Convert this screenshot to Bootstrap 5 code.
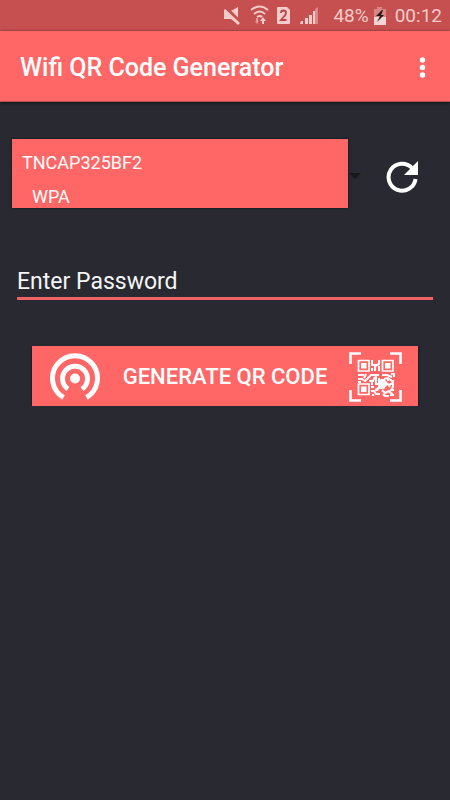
<!DOCTYPE html>
<html lang="en">
<head>
<meta charset="utf-8">
<meta name="viewport" content="width=device-width, initial-scale=1">
<title>Wifi QR Code Generator</title>
<link href="https://cdn.jsdelivr.net/npm/bootstrap@5.3.0/dist/css/bootstrap.min.css" rel="stylesheet">
<style>
  body { font-family: Roboto, "Liberation Sans", sans-serif; background: #282931; color: #fff; }
  svg { display: block; flex: none; }
  .status-bar { height: 31px; background: #c6504f; color: #f3cbcb; font-size: 19px; line-height: 32px; }
  .app-bar { height: 71px; background: #f66; border-bottom: 1px solid #b94f53; box-shadow: 0 1px 3px #10131a; padding-top: 3px; }
  .app-title { font-size: 25px; line-height: 32px; font-weight: 500; }
  .network { height: 69px; background: #f66; box-shadow: 0 0 2px #06141f; font-size: 18px; line-height: 24px; padding: 12px 10px 0; }
  .network select { appearance: none; background: transparent; border: 0; color: #fff; padding: 0; height: 24px; line-height: 24px; }
  .network output { padding: 10px 0 0 10px; }
  .refresh { padding: 6px 19px 0 23px; }
  .password { background: transparent; border: 0; border-bottom: 3px solid #ee6266; color: #fff; font-size: 23px; line-height: 30px; height: 35px; padding: 1px 0 0; }
  .password::placeholder { color: #f5f5f5; opacity: 1; }
  .password:focus { outline: 0; }
  .generate { height: 60px; background: #f66; color: #fff; border: 0; font-size: 22px; line-height: 28px; font-weight: 500; box-shadow: 0 1px 2px #06101a; padding: 2px 16px 0 17px; }
  .form-area { padding: 37px 12px 0; }
  .field-row { padding: 57px 5px 0; }
  .action-row { padding: 46px 20px 0; }
</style>
<script src="https://cdn.jsdelivr.net/npm/bootstrap@5.3.0/dist/js/bootstrap.bundle.min.js"></script>
</head>
<body>
<div class="status-bar d-flex align-items-center justify-content-end pe-2">
  <svg width="109" height="31" viewBox="0 0 109 31" fill="#f3cbcb" aria-hidden="true">
    <path d="M0 12h5l9-5v17l-7-5H0z"/>
    <path d="M0 7l18 18" stroke="#c6504f" stroke-width="5"/>
    <path d="M0 10l15 14" stroke="#f3cbcb" stroke-width="3"/>
    <g fill="none" stroke="#f3cbcb" stroke-width="2"><path d="M27 10q9-7 17 0M30 14q6-5 11 0M33 17q3-2 5 0"/></g>
    <path d="M36 21l3-4 3 4h-2v3h-2v-3z"/>
    <path d="M31 21l2 3 2-3h-1v-3h-2v3z" opacity=".6"/>
    <path d="M54 7h9l3 3v13q0 1-1 1H54q-1 0-1-1V8q0-1 1-1z"/>
    <path d="M57 13q0-2.500 2.500-2.500t2.500 2.500q0 1.500-2 3.500l-3 3.500h5.500" fill="none" stroke="#b84747" stroke-width="1.800"/>
    <path d="M77 21h2v3h-3zM81 18h3v6h-3zM85 15h3v9h-3zM89 11h2v13h-2z"/>
    <path d="M91 9l3-2v17h-3z" opacity=".45"/>
  </svg>
  <span>48%</span>
  <svg class="ms-1 me-2" width="14" height="18" viewBox="0 0 14 18" aria-hidden="true">
    <path d="M4 0h5v2h4v16H1V2h3z" fill="#d98685"/><path d="M1 10h12v8H1z" fill="#f3d5d5"/>
    <path d="M9 3l-6 6h4l-3 6 7-7H8l2-5z" fill="#291818"/>
  </svg>
  <span>00:12</span>
</div>
<header class="app-bar d-flex align-items-center justify-content-between ps-3 pe-3">
  <h1 class="app-title m-0 ps-1">Wifi QR Code Generator</h1>
  <button type="button" class="btn border-0 p-0 me-1" aria-label="More options">
    <svg width="16" height="24" viewBox="0 0 16 24" fill="#fff"><circle cx="8.500" cy="4" r="2.700"/><circle cx="8.500" cy="11.500" r="2.700"/><circle cx="8.500" cy="19" r="2.700"/></svg>
  </button>
</header>
<main class="form-area">
  <div class="d-flex align-items-center">
    <div class="network flex-grow-1 d-flex flex-column">
      <select aria-label="Wifi network"><option>TNCAP325BF2</option></select>
      <output>WPA</output>
    </div>
    <svg class="mt-1" width="14" height="8" viewBox="0 0 14 8" fill="#16171b" aria-hidden="true"><path d="M1 1h12L7 7z"/></svg>
    <button type="button" class="btn border-0 refresh" aria-label="Refresh networks">
      <svg width="34" height="34" viewBox="0 0 34 34"><path d="M30.500 19A13.500 13.500 0 1 1 27 8" fill="none" stroke="#fff" stroke-width="4"/><path d="M33 1v14H19z" fill="#fff"/></svg>
    </button>
  </div>
  <div class="field-row">
    <input class="password w-100 d-block rounded-0" type="password" placeholder="Enter Password" aria-label="Enter Password">
  </div>
  <div class="action-row">
    <button type="button" class="generate w-100 d-flex align-items-center justify-content-between">
      <svg width="52" height="52" viewBox="0 0 52 52" aria-hidden="true"><g fill="none" stroke="#fff" stroke-width="5"><path d="M14.500 46.500A22.500 22.500 0 1 1 37.500 46.500"/><path d="M19 38A12.500 12.500 0 1 1 33 38"/></g><circle cx="26" cy="27.500" r="5" fill="#fff"/></svg>
      <span>GENERATE QR CODE</span>
      <svg width="53" height="50" viewBox="0 0 53 50" aria-hidden="true">
        <path d="M1.500 12V1.500H12M41 1.500H51.500V12M51.500 38V48.500H41M12 48.500H1.500V38" fill="none" stroke="#fff" stroke-width="2.600"/>
        <g fill="none" stroke="#fff" stroke-width="1.700"><path d="M9.500 8.500h10.500v10.500H9.500zM33.500 8.500h10.500v10.500H33.500zM9.500 32h10.500v10.500H9.500z"/></g>
        <path d="M12 11h5.500v5.500H12zM36 11h5.500v5.500H36zM12 34.500h5.500V40H12z" fill="#fff"/>
        <g fill="none" stroke="#fff" stroke-width="2" stroke-linejoin="round">
          <path d="M23 8v5h3v6M30 8v4l-4 2M30 14v5M23 16v3"/>
          <path d="M9 23h6M9 27h4l3 2 6-6h8M17 22l-2 4M9 30h3M20 29h4l2-4M27 23v8M23 30v3M30 26v4"/>
          <path d="M33 23h5l5 2M42 22h3v3M35 27l4-1 4 3h2M39 25v4"/>
          <path d="M22 35h3M22 39h3l2 3h4M23 43h2M34 42l2 2h4M33 38l3 3 4-2 4 4M40 33l4-2v4l-2 3h3M38 31l3 4M41 43h4"/>
        </g>
        <path d="M29 29l3-2h3l3 3v3l-3 4h-5l-1 2h-3v-2l3-2v-2h-3v-2h3z" fill="#fff"/>
      </svg>
    </button>
  </div>
</main>
</body>
</html>
